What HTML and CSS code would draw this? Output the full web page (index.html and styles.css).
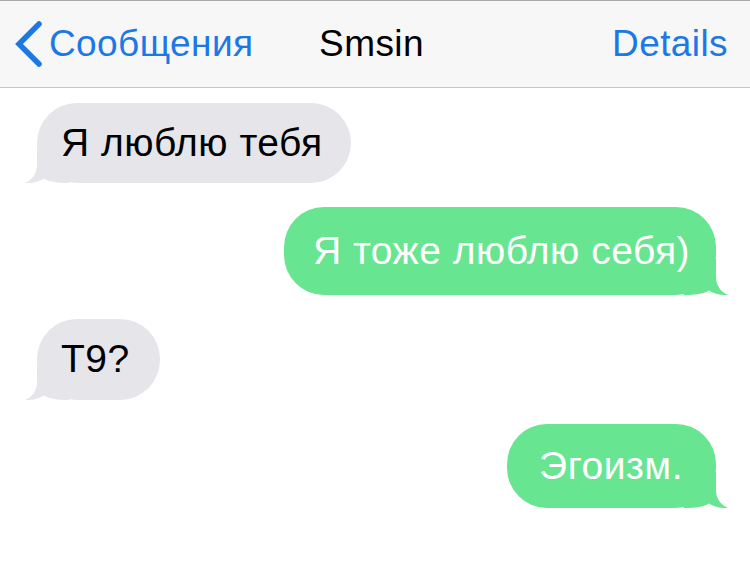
FILE: index.html
```html
<!DOCTYPE html>
<html lang="ru">
<head>
<meta charset="utf-8">
<title>Smsin</title>
<link rel="stylesheet" href="styles.css">
</head>
<body>
<header class="navbar">
  <div class="nav-left">
    <svg class="chevron" width="28" height="46" viewBox="0 0 28 46" aria-hidden="true">
      <polyline points="24,3 4,23 24,43" fill="none" stroke="#1c78e4" stroke-width="5.5" stroke-linecap="round" stroke-linejoin="miter"/>
    </svg>
    <span class="back-label">Сообщения</span>
  </div>
  <div class="nav-title">Smsin</div>
  <div class="nav-right">Details</div>
</header>
<main class="thread">
  <div class="bubble them b1">Я люблю тебя
    <svg class="tail" width="44" height="36" viewBox="0 0 44 36" aria-hidden="true"><path d="M12 0 V18 C12 27 7 33 0 36 C8 36.5 14 34.5 19 31.5 C25 35 33 36 44 36 V0 Z"/></svg>
  </div>
  <div class="bubble me b2">Я тоже люблю себя)
    <svg class="tail" width="44" height="36" viewBox="0 0 44 36" aria-hidden="true"><path d="M12 0 V18 C12 27 7 33 0 36 C8 36.5 14 34.5 19 31.5 C25 35 33 36 44 36 V0 Z"/></svg>
  </div>
  <div class="bubble them b3">T9?
    <svg class="tail" width="44" height="36" viewBox="0 0 44 36" aria-hidden="true"><path d="M12 0 V18 C12 27 7 33 0 36 C8 36.5 14 34.5 19 31.5 C25 35 33 36 44 36 V0 Z"/></svg>
  </div>
  <div class="bubble me b4">Эгоизм.
    <svg class="tail" width="44" height="36" viewBox="0 0 44 36" aria-hidden="true"><path d="M12 0 V18 C12 27 7 33 0 36 C8 36.5 14 34.5 19 31.5 C25 35 33 36 44 36 V0 Z"/></svg>
  </div>
</main>
</body>
</html>
```
FILE: styles.css
```css
html, body {
  margin: 0;
  padding: 0;
  background: #ffffff;
}

body {
  font-family: "Liberation Sans", Arial, Helvetica, sans-serif;
  width: 750px;
  height: 561px;
  overflow: hidden;
}

.navbar {
  box-sizing: border-box;
  height: 88px;
  background: #f7f7f7;
  border-top: 1px solid #a9a9a9;
  border-bottom: 1px solid #c6c6c6;
  display: grid;
  grid-template-columns: 1fr auto 1fr;
  align-items: center;
  padding: 0 22px 0 15px;
  font-size: 37px;
  letter-spacing: 0.4px;
}

.nav-left {
  display: flex;
  align-items: center;
  gap: 6px;
  color: #1c78e4;
  justify-self: start;
}

.chevron {
  display: block;
}

.nav-title {
  color: #000;
  justify-self: center;
}

.nav-right {
  color: #1c78e4;
  justify-self: end;
}

.thread {
  display: flex;
  flex-direction: column;
  gap: 24px;
  padding: 15px 34px 0 37px;
}

.bubble {
  position: relative;
  isolation: isolate;
  font-size: 39px;
  line-height: 44px;
  letter-spacing: 0.5px;
  border-radius: 40px;
  padding: 18px 28px 18px 24px;
  white-space: nowrap;
}

.bubble .tail {
  position: absolute;
  z-index: -1;
  bottom: 0;
  left: -12px;
  display: block;
}

.them {
  align-self: flex-start;
  background: #e5e5ea;
  color: #000;
}

.them .tail {
  fill: #e5e5ea;
}

.me {
  align-self: flex-end;
  background: #68e590;
  color: #ffffff;
}

.me .tail {
  left: auto;
  right: -12px;
  fill: #68e590;
  transform: scaleX(-1);
}

.b2 {
  padding: 22px 26px 22px 29px;
}

.b3 {
  padding: 18px 30px 19px 24px;
}

.b4 {
  padding: 20px 33px 20px 32px;
}
```
